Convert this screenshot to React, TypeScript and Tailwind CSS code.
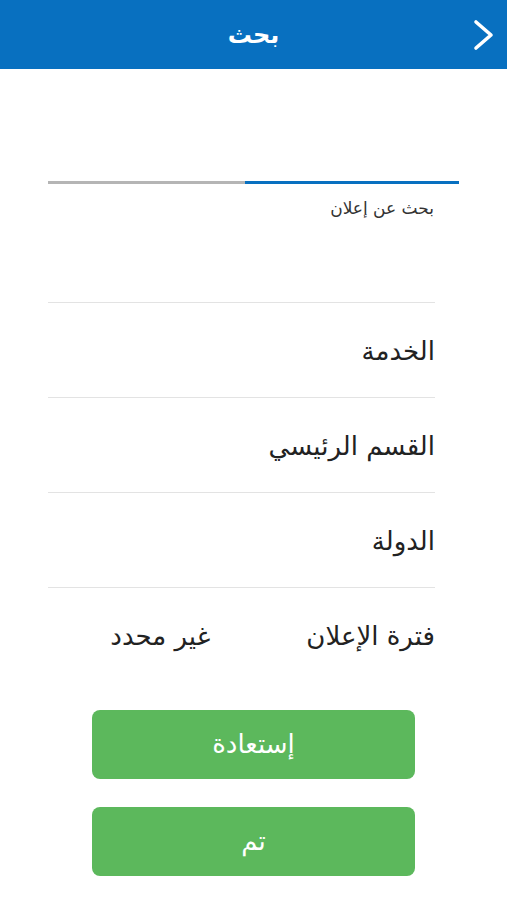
const rows = ["الخدمة", "القسم الرئيسي", "الدولة"];

export default function App() {
  return (
    <div
      dir="rtl"
      className="w-[507px] h-[900px] bg-white overflow-hidden"
      style={{ fontFamily: '"DejaVu Sans", "Noto Sans", sans-serif' }}
    >
      {/* header */}
      <div className="h-[69px] bg-[#0870c0] grid grid-cols-[60px_1fr_60px] items-center">
        <div className="flex justify-start pr-[12px]">
          <svg width="24" height="32" viewBox="0 0 24 32" fill="none">
            <polyline points="5,3 20,16 5,29" stroke="white" strokeWidth="3.6" strokeLinecap="round" strokeLinejoin="round" />
          </svg>
        </div>
        <div className="text-center text-white text-[24px] font-bold">بحث</div>
        <div />
      </div>

      {/* search field */}
      <div className="px-[48px] pt-[112px]">
        <div className="flex h-[3px]">
          <div className="flex-1 bg-[#0870c0]" />
          <div className="w-[197px] bg-[#b5b5b5]" />
        </div>
        <div className="mt-[14px] pr-[25px] text-[17px] text-[#333] leading-[20px]">بحث عن إعلان</div>
      </div>

      {/* rows */}
      <div className="mt-[84px] pr-[72px] pl-[48px]">
        {rows.map((r) => (
          <div key={r} className="border-t-[1.5px] border-[#e3e3e3] h-[95px] flex items-center pt-[3px] text-[26px] text-[#222]">
            {r}
          </div>
        ))}
        <div className="border-t-[1.5px] border-[#e3e3e3] h-[95px] flex items-center pt-[3px] text-[26px] text-[#222]">
          <span>فترة الإعلان</span>
          <span className="mr-[96px]">غير محدد</span>
        </div>
      </div>

      {/* buttons */}
      <div className="mt-[28px] flex flex-col items-center gap-[28px]">
        <button className="w-[323px] h-[69px] rounded-[8px] bg-[#5cb85c] text-white text-[26px]">إستعادة</button>
        <button className="w-[323px] h-[69px] rounded-[8px] bg-[#5cb85c] text-white text-[26px]">تم</button>
      </div>
    </div>
  );
}
